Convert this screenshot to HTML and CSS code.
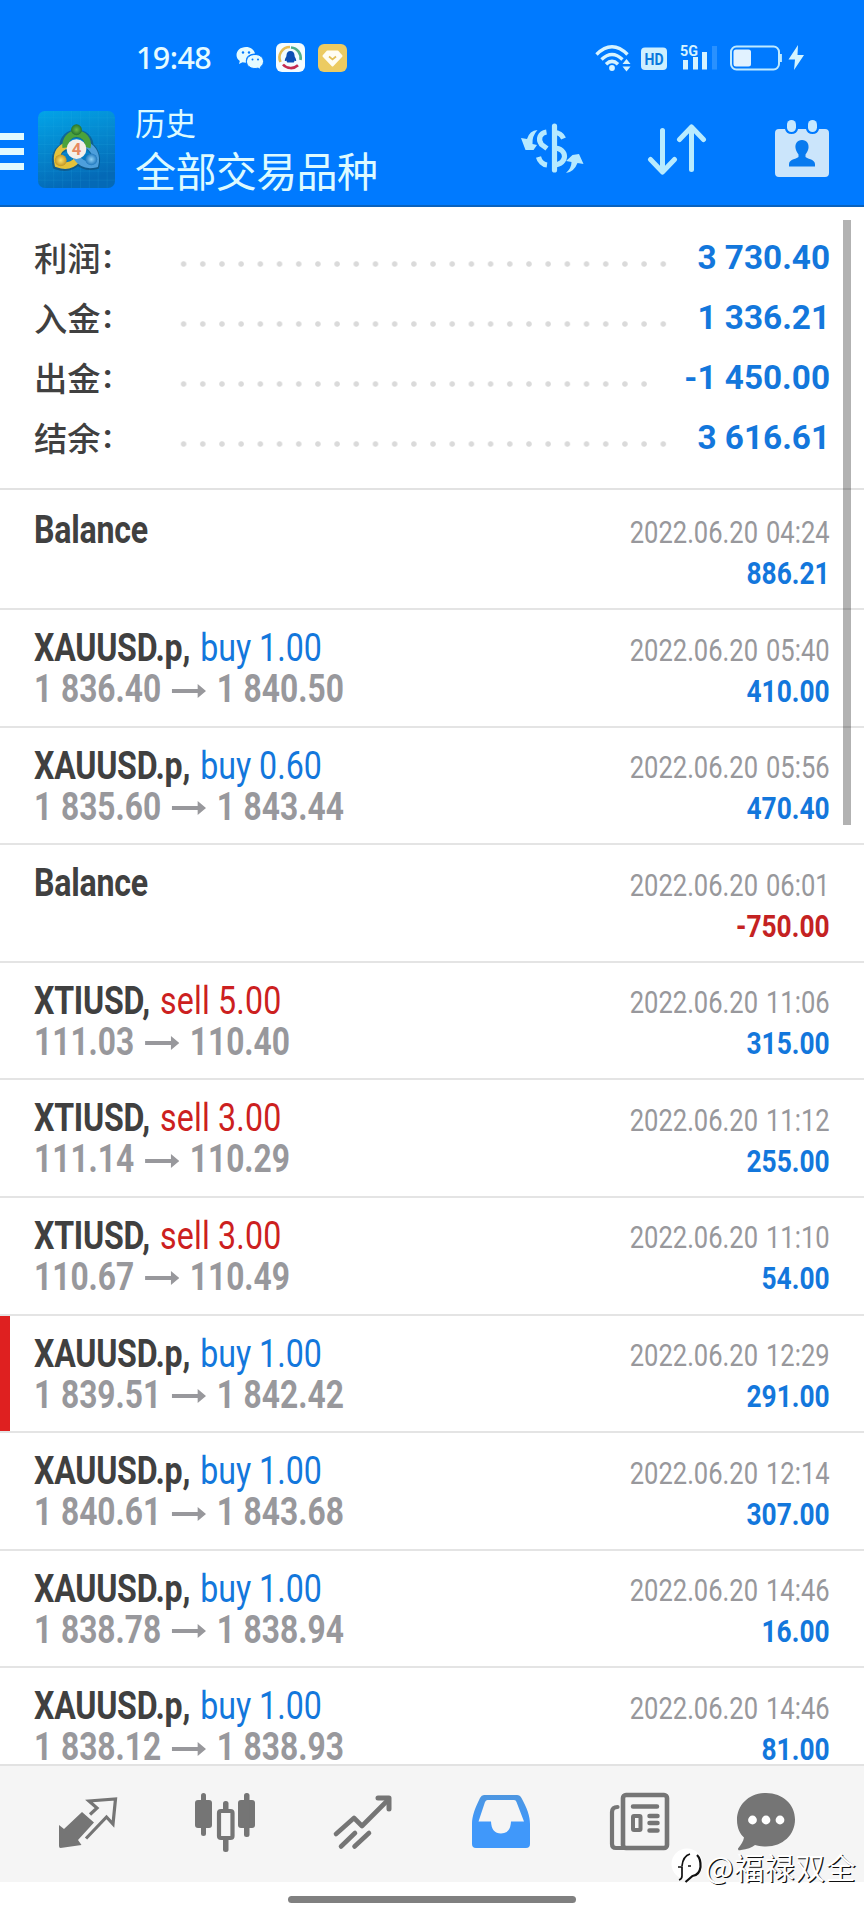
FILE: index.html
```html
<!DOCTYPE html>
<html lang="zh-CN">
<head>
<meta charset="utf-8">
<title>历史</title>
<link rel="stylesheet" href="styles.css">
</head>
<body>
<div class="screen">
<header class="top">
  <div class="status">
    <span class="clock">19:48</span>
    <svg class="wechat" width="28" height="24" viewBox="0 0 28 24"><path fill="#e4fbff" d="M10 0C4.500 0 .5 3.600.5 8c0 2.500 1.300 4.500 3.300 6L3 17l3.500-1.800c1 .3 2.200.5 3.500.5C9 10 13 6.800 19 6.500 18 2.500 14.500 0 10 0z"/><path fill="#e4fbff" stroke="#007aff" d="M19 7.500c-5 0-8.500 3-8.500 7s3.500 7 8.500 7c1 0 2-.2 3-.4l3 1.600-.7-2.600c2-1.300 3.200-3.300 3.200-5.600 0-4-3.500-7-8.500-7z"/><g fill="#007aff"><circle cx="7" cy="5.500" r="1.200"/><circle cx="13" cy="5.500" r="1.200"/><circle cx="16.500" cy="12.500" r="1"/><circle cx="22" cy="12.500" r="1"/></g></svg>
    <svg class="qq" width="29" height="29" viewBox="0 0 29 29"><rect width="29" height="29" rx="6" fill="#f4fcff"/><g fill="none" stroke-width="2.600"><path stroke="#e5bd55" d="M4.500 19A10.500 10.500 0 0 1 14 4"/><path stroke="#4fae8b" d="M15 4.500A10.500 10.500 0 0 1 24.500 17"/><path stroke="#c52b50" d="M7 21.500a10.500 10.500 0 0 0 15 .8"/></g><path fill="#0d4fb5" d="M14.500 8c-2.600 0-4 2-4 4.300 0 2-1.700 3.200-1.700 5.200 0 .8.700.8 1.500 0 .4 1.300 1 1.800 1 2h6.400c.3-.4.8-1 1-2 .8.800 1.500.8 1.500 0 0-2-1.700-3.200-1.700-5.200C18.500 10 17.100 8 14.500 8z"/></svg>
    <svg class="gem" width="29" height="28" viewBox="0 0 29 28"><rect width="29" height="28" rx="6" fill="#eccb62"/><path fill="#fffdf2" stroke="#fffdf2" stroke-width="2" stroke-linejoin="round" d="M9.500 7.500h10l4 4.500-9 9.500-9-9.500z"/><path fill="none" stroke="#e3bf55" stroke-width="1.700" d="M11 12.500l3.500 3 3.500-3"/></svg>
    <svg class="signals" width="212" height="30" viewBox="0 0 212 30">
      <g fill="none" stroke="#d6f3ff" stroke-width="3.400"><path d="M1.500 11.500Q17 -4 32.500 11.500"/><path d="M6.500 16.500Q17 6.500 27.500 16.500"/><path d="M11 21.300Q17 15.500 23 21.300"/></g>
      <circle cx="17" cy="25" r="2.900" fill="#d6f3ff"/><path fill="#d6f3ff" d="M31.500 16l4 5h-8zM31.500 28.500l4-5h-8z"/>
      <rect x="46" y="4.500" width="26" height="22.500" rx="4" fill="#cdefff"/><text x="59" y="22" class="hd" text-anchor="middle" textLength="19" lengthAdjust="spacingAndGlyphs">HD</text>
      <text x="85" y="12.500" class="g5" textLength="18" lengthAdjust="spacingAndGlyphs">5G</text>
      <g fill="#d6f3ff"><rect x="88" y="17" width="5" height="9.500"/><rect x="98" y="14" width="5" height="12.500"/><rect x="107" y="9" width="5" height="17.500"/></g><rect x="117" y="3" width="5" height="23.500" fill="#2991ff"/>
      <rect x="136" y="3.500" width="48" height="23" rx="5.500" fill="none" stroke="#bfeaff" stroke-width="2"/><rect x="138.500" y="6.500" width="17.500" height="17" rx="2.500" fill="#e1f2ff"/><path d="M185.800 11v8" stroke="#bfeaff" stroke-width="2.200"/>
      <path fill="#d3f4ff" d="M203 2l-9.500 14.500h6.500l-1 10.500 10-15h-6.500z"/>
    </svg>
  </div>
  <div class="toolbar">
    <div class="menu"><i></i><i></i><i></i></div>
    <svg class="logo" width="77" height="77" viewBox="0 0 78 78">
      <defs><linearGradient id="lg" x2=".3" y2="1"><stop stop-color="#02a4e8"/><stop offset=".5" stop-color="#0587ce"/><stop offset="1" stop-color="#0469b6"/></linearGradient>
      <radialGradient id="gr"><stop stop-color="#66b848"/><stop offset="1" stop-color="#25742f"/></radialGradient><radialGradient id="ye"><stop stop-color="#ffe56b"/><stop offset="1" stop-color="#c49524"/></radialGradient><radialGradient id="bl"><stop stop-color="#8fd2f8"/><stop offset="1" stop-color="#1f77bd"/></radialGradient></defs>
      <rect width="78" height="78" rx="7" fill="url(#lg)"/>
      <path d="M7 0v78M16 0v78M25 0v78M34 0v78M43 0v78M52 0v78M61 0v78M70 0v78M0 7h78M0 16h78M0 25h78M0 34h78M0 43h78M0 52h78M0 61h78M0 70h78" stroke="#39bff0" stroke-opacity=".13"/>
      <g fill="none" stroke-width="6.500"><path stroke="#17405b" stroke-opacity=".5" stroke-width="8.500" d="M26 36c0-8 6-13 13-13s13 5 13 13M28 36c-9 3-11 11-9 19 8 3 16 1 22-5M49 34c8 4 11 12 9 21-8 2-16-1-20-8"/><path stroke="#e5c23b" d="M29 35c-9 3-11 11-9 19 8 3 15 1 20-5"/><path stroke="#4d9fdc" d="M49 34c8 4 11 12 9 20-8 2-15-1-20-8"/><path stroke="#4ba23c" d="M28 37c-1-8 4-14 11-14s13 6 11 14"/></g>
      <circle cx="39" cy="19" r="5.500" fill="url(#gr)"/><circle cx="23" cy="50" r="6" fill="url(#ye)"/><circle cx="54" cy="49" r="6" fill="url(#bl)"/>
      <circle cx="39" cy="38.500" r="10" fill="#f4efea"/><text x="39" y="45" text-anchor="middle" class="four">4</text>
    </svg>
    <div class="titles"><div class="t1">历史</div><div class="t2">全部交易品种</div></div>
    <svg class="exch" width="64" height="52" viewBox="0 0 64 52"><g fill="none" stroke="#b5e9ff" stroke-width="5.200"><path d="M34.500 4v44" stroke-linecap="round"/><path d="M26.500 10C20 11 17.500 17 21.500 22.500l5.500 4"/><path d="M34 10.500q7 0 9.500 6M34 26c14 0 14 16.500 0 17M18.500 35c1 4 4.500 7.500 8.500 8"/></g><path fill="#b5e9ff" d="M17.500 8q-8 .5-10.500 9l-6-1 4.500 12h8l3.500-5-4.500-1q-.5-8 5-14zM46 51q8-1 11.500-10l6 1-4.500-10-6.500 1-6.500 6 5.500 1q0 6-5.500 11z"/></svg>
    <svg class="sort" width="60" height="52" viewBox="0 0 60 52"><path d="M15.500 7.500v41M3.500 36.500l12 12.500 12-12.500M44.500 46.500V4M32.500 16.500L44.500 4l12 12.500" fill="none" stroke="#b8ebff" stroke-width="5" stroke-linecap="round" stroke-linejoin="round"/></svg>
    <svg class="cal" width="56" height="59" viewBox="0 0 56 59"><path fill="#cbe5fb" d="M5 10h6q1 5 6.500 5t6.500-5h8q1 5 6.500 5t6.500-5h6q4 0 4 4v40q0 4-4 4H5q-4 0-4-4V14q0-4 4-4z"/><rect x="13" y="1" width="9" height="12" rx="4.500" fill="#c6e8ff"/><rect x="34" y="1" width="9" height="12" rx="4.500" fill="#c6e8ff"/><path fill="#087aef" d="M28 21c-5 0-7 4-6.500 8 .4 3 2 5 3 6.500v2.500c-3 2.500-9 2-9.500 7v2.500h26V45c-.5-5-6.500-4.500-9.500-7v-2.500c1-1.500 2.600-3.500 3-6.500.5-4-1.500-8-6.500-8z"/></svg>
  </div>
</header>

<main class="content">
  <section class="summary">
    <div class="sum"><span class="label">利润<b>:</b></span><span class="dots"></span><span class="value">3 730.40</span></div>
    <div class="sum"><span class="label">入金<b>:</b></span><span class="dots"></span><span class="value">1 336.21</span></div>
    <div class="sum"><span class="label">出金<b>:</b></span><span class="dots short"></span><span class="value">-1 450.00</span></div>
    <div class="sum"><span class="label">结余<b>:</b></span><span class="dots"></span><span class="value">3 616.61</span></div>
  </section>
  <section class="deals">
    <article class="row"><div class="left"><p class="name"><b>Balance</b></p></div><div class="right"><p class="date">2022.06.20 04:24</p><p class="amt">886.21</p></div></article>
    <article class="row"><div class="left"><p class="name"><b>XAUUSD.p,</b> <span class="buy">buy 1.00</span></p><p class="price">1 836.40<svg class="arrow" viewBox="0 0 41 14" preserveAspectRatio="none"><path d="M0 5h31V0l10 7-10 7V9H0z"/></svg>1 840.50</p></div><div class="right"><p class="date">2022.06.20 05:40</p><p class="amt">410.00</p></div></article>
    <article class="row"><div class="left"><p class="name"><b>XAUUSD.p,</b> <span class="buy">buy 0.60</span></p><p class="price">1 835.60<svg class="arrow" viewBox="0 0 41 14" preserveAspectRatio="none"><path d="M0 5h31V0l10 7-10 7V9H0z"/></svg>1 843.44</p></div><div class="right"><p class="date">2022.06.20 05:56</p><p class="amt">470.40</p></div></article>
    <article class="row"><div class="left"><p class="name"><b>Balance</b></p></div><div class="right"><p class="date">2022.06.20 06:01</p><p class="amt neg">-750.00</p></div></article>
    <article class="row"><div class="left"><p class="name"><b>XTIUSD,</b> <span class="sell">sell 5.00</span></p><p class="price">111.03<svg class="arrow" viewBox="0 0 41 14" preserveAspectRatio="none"><path d="M0 5h31V0l10 7-10 7V9H0z"/></svg>110.40</p></div><div class="right"><p class="date">2022.06.20 11:06</p><p class="amt">315.00</p></div></article>
    <article class="row"><div class="left"><p class="name"><b>XTIUSD,</b> <span class="sell">sell 3.00</span></p><p class="price">111.14<svg class="arrow" viewBox="0 0 41 14" preserveAspectRatio="none"><path d="M0 5h31V0l10 7-10 7V9H0z"/></svg>110.29</p></div><div class="right"><p class="date">2022.06.20 11:12</p><p class="amt">255.00</p></div></article>
    <article class="row"><div class="left"><p class="name"><b>XTIUSD,</b> <span class="sell">sell 3.00</span></p><p class="price">110.67<svg class="arrow" viewBox="0 0 41 14" preserveAspectRatio="none"><path d="M0 5h31V0l10 7-10 7V9H0z"/></svg>110.49</p></div><div class="right"><p class="date">2022.06.20 11:10</p><p class="amt">54.00</p></div></article>
    <article class="row flagged"><div class="left"><p class="name"><b>XAUUSD.p,</b> <span class="buy">buy 1.00</span></p><p class="price">1 839.51<svg class="arrow" viewBox="0 0 41 14" preserveAspectRatio="none"><path d="M0 5h31V0l10 7-10 7V9H0z"/></svg>1 842.42</p></div><div class="right"><p class="date">2022.06.20 12:29</p><p class="amt">291.00</p></div></article>
    <article class="row"><div class="left"><p class="name"><b>XAUUSD.p,</b> <span class="buy">buy 1.00</span></p><p class="price">1 840.61<svg class="arrow" viewBox="0 0 41 14" preserveAspectRatio="none"><path d="M0 5h31V0l10 7-10 7V9H0z"/></svg>1 843.68</p></div><div class="right"><p class="date">2022.06.20 12:14</p><p class="amt">307.00</p></div></article>
    <article class="row"><div class="left"><p class="name"><b>XAUUSD.p,</b> <span class="buy">buy 1.00</span></p><p class="price">1 838.78<svg class="arrow" viewBox="0 0 41 14" preserveAspectRatio="none"><path d="M0 5h31V0l10 7-10 7V9H0z"/></svg>1 838.94</p></div><div class="right"><p class="date">2022.06.20 14:46</p><p class="amt">16.00</p></div></article>
    <article class="row"><div class="left"><p class="name"><b>XAUUSD.p,</b> <span class="buy">buy 1.00</span></p><p class="price">1 838.12<svg class="arrow" viewBox="0 0 41 14" preserveAspectRatio="none"><path d="M0 5h31V0l10 7-10 7V9H0z"/></svg>1 838.93</p></div><div class="right"><p class="date">2022.06.20 14:46</p><p class="amt">81.00</p></div></article>
  </section>
  <div class="scrollbar"></div>
</main>

<nav class="tabs">
  <svg class="tab" viewBox="0 0 64 64"><path fill="#757575" d="M3 33l5 4 18-17 12 10.500-16 17.500 3.500 5L4.500 56Q3 56 3 54z"/><path fill="none" stroke="#757575" stroke-width="3.200" d="M34 22.500l7-6.500-8-7L59.500 7 57 32l-6.500-7L30 46.500"/></svg>
  <svg class="tab" viewBox="0 0 64 64"><g fill="#757575"><rect x="1" y="8" width="17" height="28" rx="3"/><rect x="7" y="1" width="5" height="43" rx="2.500"/><rect x="44" y="8" width="17" height="28" rx="3"/><rect x="50" y="1" width="5.500" height="44" rx="2.500"/><rect x="29" y="9" width="5.500" height="12" rx="2.500"/><rect x="29" y="44" width="5.500" height="16" rx="2.500"/></g><rect x="25" y="19" width="13.500" height="27" rx="2" fill="none" stroke="#757575" stroke-width="4.200"/></svg>
  <svg class="tab" viewBox="0 0 64 64"><path fill="none" stroke="#757575" stroke-width="4.600" stroke-linecap="round" stroke-linejoin="round" d="M4 42l18-16 8 8L56 8M9 54.500L23 41M22.500 54.500L37 41"/><path fill="none" stroke="#757575" stroke-width="5" stroke-linejoin="round" stroke-linecap="round" d="M46 6h11v11"/></svg>
  <svg class="tab" viewBox="0 0 64 64"><defs><linearGradient id="tray" x2="0" y2="1"><stop stop-color="#4d96e0"/><stop offset=".5" stop-color="#4098fa"/></linearGradient></defs><path fill="url(#tray)" fill-rule="evenodd" d="M14 3h33q3 0 4.500 3C57 16 60 24 60 32v20q0 4-4 4H6q-4 0-4-4V32c0-8 3-16 8-26q1.500-3 4-3zM17.500 8Q16 8 15 10L8.500 29.500h12.500q.5 12 10 12t10-12h13L46.500 10Q46 8 44 8z"/></svg>
  <svg class="tab" viewBox="0 0 64 64"><g fill="none" stroke="#757575"><rect x="15" y="3" width="44" height="53" rx="3" stroke-width="4.600"/><path stroke-width="4.200" stroke-linecap="round" d="M9.500 15Q4 15 4 20v32q0 4 4 4h8"/><path stroke-width="4.500" stroke-linecap="round" d="M25 14.500h24M41.500 24h8M41.500 31h8M41.500 38.500h8"/><rect x="25" y="24" width="7.500" height="14" rx="1" stroke-width="4"/></g></svg>
  <svg class="tab" viewBox="0 0 64 64"><path fill="#757575" d="M32 1C15 1 3 13 3 28c0 8 3 14 7 17.500-.5 4-3 7-6 11 0 2 1 2 3 1.500 6-.5 11-2.500 14-5 3 1 7 1.500 11 1.500 17 0 29-12 29-27S49 1 32 1z"/><g fill="#fff"><circle cx="18.500" cy="28" r="4.400"/><circle cx="32" cy="28" r="4.400"/><circle cx="46" cy="28" r="4.400"/></g></svg>
</nav>
<footer class="home"><div class="pill"></div></footer>
<div class="mark"><svg width="34" height="38" viewBox="0 0 34 38"><circle cx="17" cy="17" r="15.500" fill="#fff"/><path fill="none" stroke="#111" stroke-width="1.700" d="M8 20h4v9q0 3-3 4M12 19q1-10 8-12M18 19h3"/><path fill="none" stroke="#111" stroke-width="2.200" d="M27 8q4 4 3.500 12-1 8-8 9l-7 6"/></svg><span>@福禄双全</span></div>
</div>
</body>
</html>
```

FILE: styles.css
```css
* { box-sizing: border-box; }
body { margin: 0; background: #fff; font-family: Roboto, "Noto Sans CJK SC", sans-serif; }
p { margin: 0; white-space: nowrap; }
svg { display: block; flex: none; }
.screen { position: relative; width: 864px; height: 1920px; overflow: hidden; display: flex; flex-direction: column; }

.top { height: 207px; flex: none; background: #007aff; border-bottom: 2px solid #0a62bd; }
.status { display: flex; height: 111px; padding: 43px 0 0 136px; align-items: flex-start; }
.clock { width: 100px; margin-top: -2px; font: 500 30.5px/32px "Noto Sans", sans-serif; letter-spacing: -.6px; color: #e4fbff; }
.wechat { margin-top: 4px; }
.qq { margin-left: 12px; }
.gem { margin: 1px 0 0 13px; }
.signals { margin-left: 248px; }
.hd { font: 700 16.500px Roboto; fill: #0877dd; }
.g5 { font: 700 15.500px Roboto; fill: #d6f3ff; }
.four { font: 700 17px Roboto; fill: #e78960; }

.toolbar { display: flex; align-items: flex-start; }
.menu { width: 24px; margin-top: 22px; display: flex; flex-direction: column; gap: 8px; }
.menu i { height: 7px; background: #e0faff; }
.logo { margin-left: 14px; }
.titles { width: 386px; padding-left: 20px; color: #ddfaff; font-family: "Noto Sans CJK SC", sans-serif; }
.t1 { margin-top: -11px; font-size: 30.500px; line-height: 44px; }
.t2 { margin-top: -5px; font-size: 41px; line-height: 60px; letter-spacing: -.6px; }
.exch { margin: 11px 0 0 19px; }
.sort { margin: 11.500px 0 0 63px; }
.cal { margin: 8px 0 0 67px; }

.content { position: relative; height: 1557px; overflow: hidden; }
.summary { height: 283px; padding: 21px 34px 0; border-bottom: 2px solid #e2e2e2; }
.sum { display: flex; height: 60px; align-items: center; }
.label { display: flex; width: 140.400px; margin-top: -3px; font-size: 33.300px; font-weight: 500; color: #404040; font-family: "Noto Sans CJK SC", sans-serif; line-height: 60px; }
.label b { padding-left: 2.500px; font-family: Roboto; font-weight: 700; }
.dots { width: 499.200px; height: 8px; margin-top: 12px; background: radial-gradient(circle, #dadada 2.300px, transparent 3.200px) 0 0 / 19.200px 8px; }
.dots.short { width: 480px; }
.value { margin: 0 0 0 auto; font-size: 33.300px; line-height: 60px; font-weight: 700; color: #1377dc; white-space: nowrap; }

.row { position: relative; display: flex; justify-content: space-between; height: 117.600px; padding: 0 34px; border-bottom: 2px solid #e4e4e4; background: #fff; }
.row:first-child { height: 120px; padding-top: 2px; }
.flagged::before { content: ""; position: absolute; left: 0; top: 0; bottom: 0; width: 9.500px; background: #df2020; }
.left { padding-top: 17px; transform: scaleX(.835); transform-origin: left; }
.right { padding-top: 19.500px; text-align: right; }
.name { font-size: 38.500px; line-height: 42px; color: #404040; }
.name b { margin-right: 2.500px; letter-spacing: -.3px; }
.price { display: flex; align-items: center; font-size: 38px; line-height: 41px; font-weight: 700; color: #98989c; word-spacing: 1px; }
.arrow { width: 41px; height: 14px; margin: 2px 13px 0 12.500px; fill: #98989c; }
.buy { color: #1377dc; }
.sell { color: #cc2020; letter-spacing: .2px; }
.date, .amt { font-size: 31px; line-height: 41px; transform-origin: right; }
.date { color: #98989c; transform: scaleX(.824); word-spacing: 2px; }
.amt { font-weight: 700; color: #1377dc; transform: scaleX(.85); }
.neg { color: #c42222; }
.scrollbar { position: absolute; left: 843px; top: 13px; width: 8px; height: 605px; background: rgba(0,0,0,.3); }

.tabs { display: grid; grid-template-columns: 138px 138px 138px 138px 126px 64px; height: 118px; flex: none; padding: 26px 0 0 56px; border-top: 2px solid #e2e2e2; background: #f5f5f5; }
.tab { width: 64px; height: 64px; }
.home { height: 38px; padding-top: 14px; background: #fff; }
.pill { width: 288px; height: 7px; margin: 0 auto; border-radius: 4px; background: #808080; }
.mark { position: absolute; right: 8px; bottom: 34px; display: flex; align-items: center; color: #fff; font: 30px/40px "Noto Sans CJK SC", sans-serif; letter-spacing: .5px; }
.mark svg { margin-right: 1px; }
.mark span { text-shadow: 1.200px 1px 0 #111; }
```
